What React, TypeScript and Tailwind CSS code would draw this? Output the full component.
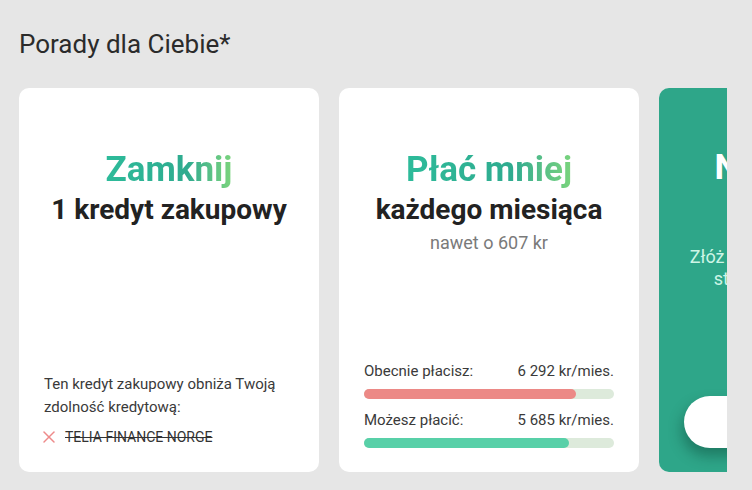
import { X } from "lucide-react";

// ---------------------------------------------------------------------------
// Data
// ---------------------------------------------------------------------------

const bars = [
  { label: "Obecnie płacisz:", value: "6 292 kr/mies.", pct: 84.8, color: "bg-[#ec8986]" },
  { label: "Możesz płacić:", value: "5 685 kr/mies.", pct: 82, color: "bg-[#58d0a8]" },
];

const gradientText =
  "bg-gradient-to-r from-[#2dbb9a] via-[#2fab8f] via-65% to-[#7ad47c] bg-clip-text text-transparent";

// ---------------------------------------------------------------------------
// Cards
// ---------------------------------------------------------------------------

function CloseCreditCard() {
  return (
    <div className="flex h-[384px] w-[300px] shrink-0 flex-col rounded-[10px] bg-white px-[25px] pb-[25px] pt-[62px]">
      <div className="text-center">
        <h3 className={`inline-block text-[35px] font-bold leading-[40px] ${gradientText}`}>Zamknij</h3>
        <p className="mt-[3px] text-[28px] font-bold leading-[34px] text-[#222]">1 kredyt zakupowy</p>
      </div>

      <div className="mt-auto">
        <p className="text-[15px] leading-[23px] text-[#3a3a3a]">
          Ten kredyt zakupowy obniża Twoją zdolność kredytową:
        </p>
        <div className="mt-[8px] flex items-center gap-[6px]">
          <X className="-ml-[5px] h-[20px] w-[20px] text-[#ee8a8a]" strokeWidth={1.8} />
          <span className="text-[14px] leading-[20px] text-[#333] line-through">TELIA FINANCE NORGE</span>
        </div>
      </div>
    </div>
  );
}

function PayLessCard() {
  return (
    <div className="flex h-[384px] w-[300px] shrink-0 flex-col rounded-[10px] bg-white px-[25px] pb-[24px] pt-[62px]">
      <div className="text-center">
        <h3 className={`inline-block text-[35px] font-bold leading-[40px] ${gradientText}`}>Płać mniej</h3>
        <p className="mt-[3px] text-[28px] font-bold leading-[34px] text-[#222]">każdego miesiąca</p>
        <p className="mt-[4px] text-[18px] leading-[24px] text-[#7a7a7a]">nawet o 607 kr</p>
      </div>

      <div className="mt-auto flex flex-col gap-[11px]">
        {bars.map((b) => (
          <div key={b.label}>
            <div className="flex items-center justify-between text-[15px] leading-[20px] text-[#3a3a3a]">
              <span>{b.label}</span>
              <span>{b.value}</span>
            </div>
            <div className="mt-[8px] h-[10px] w-full rounded-full bg-[#ddeadb]">
              <div className={`h-full rounded-full ${b.color}`} style={{ width: `${b.pct}%` }} />
            </div>
          </div>
        ))}
      </div>
    </div>
  );
}

function ApplyCard() {
  return (
    <div className="flex h-[384px] w-[300px] shrink-0 flex-col rounded-[10px] bg-[#2ea689] px-[25px] pb-[24px] pt-[60px] text-center">
      <h3 className="text-[35px] font-bold leading-[40px] text-white">Nie zwlekaj!</h3>
      <p className="mt-[58px] text-[18px] leading-[22px] text-[#cdf5e6]">
        Złóż wniosek online na naszej
        <br />
        stronie i otrzymaj ofertę
      </p>
      <button className="mt-auto h-[52px] w-full rounded-full bg-white text-[16px] font-bold text-[#2ea689] shadow-[-2px_8px_14px_rgba(0,40,30,0.35)]">
        Złóż wniosek
      </button>
    </div>
  );
}

// ---------------------------------------------------------------------------
// Page
// ---------------------------------------------------------------------------

export default function App() {
  return (
    <div className="min-h-[490px] bg-[#e6e6e6] pl-[19px] pt-[28px] font-['Roboto',sans-serif]">
      <h2 className="text-[26px] leading-[32px] text-[#2b2b2b]">Porady dla Ciebie*</h2>

      <div className="mt-[28px] w-[708px] overflow-hidden">
        <div className="flex gap-[20px]">
          <CloseCreditCard />
          <PayLessCard />
          <ApplyCard />
        </div>
      </div>
    </div>
  );
}
